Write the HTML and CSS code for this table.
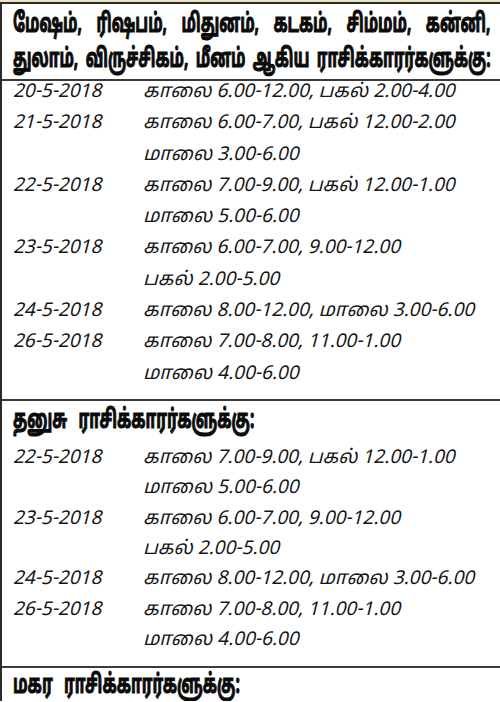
FILE: index.html
```html
<!DOCTYPE html>
<html lang="ta">
<head>
<meta charset="utf-8">
<link rel="stylesheet" href="styles.css">
</head>
<body>
<div class="sheet">
  <section class="group group-main">
    <h2 class="heading">
      <span class="hline justified">மேஷம், ரிஷபம், மிதுனம், கடகம், சிம்மம், கன்னி,</span>
      <span class="hline justified">துலாம், விருச்சிகம், மீனம் ஆகிய ராசிக்காரர்களுக்கு:</span>
    </h2>
    <div class="rows">
      <div class="date">20-5-2018</div><div class="time">காலை 6.00-12.00, பகல் 2.00-4.00</div>
      <div class="date">21-5-2018</div><div class="time">காலை 6.00-7.00, பகல் 12.00-2.00<br>மாலை 3.00-6.00</div>
      <div class="date">22-5-2018</div><div class="time">காலை 7.00-9.00, பகல் 12.00-1.00<br>மாலை 5.00-6.00</div>
      <div class="date">23-5-2018</div><div class="time">காலை 6.00-7.00, 9.00-12.00<br>பகல் 2.00-5.00</div>
      <div class="date">24-5-2018</div><div class="time">காலை 8.00-12.00, மாலை 3.00-6.00</div>
      <div class="date">26-5-2018</div><div class="time">காலை 7.00-8.00, 11.00-1.00<br>மாலை 4.00-6.00</div>
    </div>
  </section>
  <section class="group group-dhanusu">
    <h2 class="heading"><span class="hline">தனுசு ராசிக்காரர்களுக்கு:</span></h2>
    <div class="rows">
      <div class="date">22-5-2018</div><div class="time">காலை 7.00-9.00, பகல் 12.00-1.00<br>மாலை 5.00-6.00</div>
      <div class="date">23-5-2018</div><div class="time">காலை 6.00-7.00, 9.00-12.00<br>பகல் 2.00-5.00</div>
      <div class="date">24-5-2018</div><div class="time">காலை 8.00-12.00, மாலை 3.00-6.00</div>
      <div class="date">26-5-2018</div><div class="time">காலை 7.00-8.00, 11.00-1.00<br>மாலை 4.00-6.00</div>
    </div>
  </section>
  <section class="group group-makara">
    <h2 class="heading"><span class="hline">மகர ராசிக்காரர்களுக்கு:</span></h2>
  </section>
</div>
</body>
</html>
```
FILE: styles.css
```css
html, body {
  margin: 0;
  padding: 0;
  background: #ffffff;
}
body {
  padding-top: 2px;
  background: linear-gradient(#efe6bf 0 2px, #ffffff 2px);
  overflow: hidden;
  height: 702px;
  box-sizing: border-box;
}
.sheet {
  border-left: 2px solid #2b2b2b;
  border-top: 2px solid #2b2b2b;
  background: #fff;
  color: #111;
  font-family: "Noto Sans Tamil", "Lohit Tamil", "Noto Sans", sans-serif;
}
.group {
  border-bottom: 2px solid #3a3a3a;
}
.group-makara {
  border-bottom: none;
}
.heading {
  margin: 0;
  padding: 3px 0 2px 11px;
  font-size: 26px;
  line-height: 35px;
  font-weight: 700;
  color: #0a0a0a;
  -webkit-text-stroke: 1.1px #0a0a0a;
  overflow: hidden;
}
.hline {
  display: block;
  white-space: nowrap;
  transform: scaleX(0.6);
  transform-origin: left center;
  word-spacing: 12px;
}
.hline.justified {
  width: 806px;
  transform: scaleX(0.5925);
  text-align: justify;
  text-align-last: justify;
  word-spacing: 0;
}
.group-main .heading {
  padding-top: 4px;
  padding-bottom: 1px;
  border-bottom: 2px solid #3a3a3a;
}
.rows {
  display: grid;
  grid-template-columns: 130px 1fr;
  padding: 0 0 9px 11px;
  margin-top: -4px;
  font-style: italic;
  font-size: 19px;
  line-height: 31.3px;
  color: #151515;
}
.group-dhanusu .rows {
  margin-top: 0;
  padding-top: 2px;
  padding-bottom: 11px;
  line-height: 30.33px;
}
.group-makara .heading {
  padding-top: 5px;
  padding-bottom: 0;
  line-height: 28px;
}
.date, .time {
  white-space: nowrap;
}
```
